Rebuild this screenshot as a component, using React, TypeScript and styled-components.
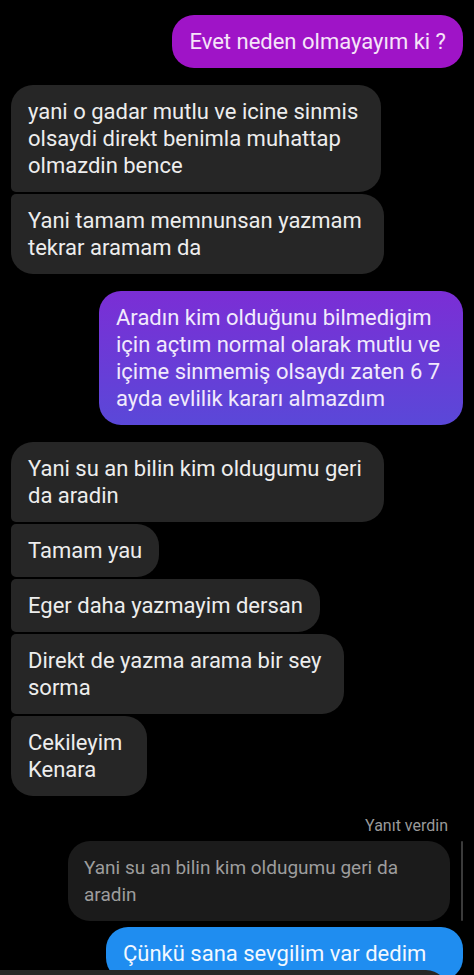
import React from "react";
import styled, { createGlobalStyle, css } from "styled-components";

const GlobalStyle = createGlobalStyle`
  html, body { margin: 0; padding: 0; background: #000; }
  body { font-family: Roboto, "Noto Sans", "Liberation Sans", sans-serif; }
  * { box-sizing: border-box; }
`;

const Screen = styled.div`
  position: relative;
  width: 474px;
  height: 975px;
  overflow: hidden;
  background: #000;
  display: flex;
  flex-direction: column;
  padding: 15px 11px 0 11px;
`;

type Pos = "single" | "first" | "middle" | "last";
type Tone = "gray" | "magenta" | "violet" | "blue";

const Group = styled.div<{ $top: number; $align: "start" | "end" }>`
  display: flex;
  flex-direction: column;
  align-items: ${(p) => (p.$align === "end" ? "flex-end" : "flex-start")};
  gap: 2px;
  margin-top: ${(p) => p.$top}px;
  flex-shrink: 0;
`;

const BIG = 22;
const SMALL = 5;

const toneStyles: Record<Tone, ReturnType<typeof css>> = {
  gray: css`
    background: #262626;
    color: #ededed;
  `,
  magenta: css`
    background: #9f14c7;
    color: #f6e4f9;
  `,
  violet: css`
    background: linear-gradient(180deg, #7b2ed5 0%, #5a48d8 100%);
    color: #f1eafc;
  `,
  blue: css`
    background: #1f8df0;
    color: #f2f8ff;
  `,
};

const Bubble = styled.div<{ $tone: Tone; $pos: Pos; $extra?: number; $width?: number }>`
  ${(p) => toneStyles[p.$tone]}
  font-family: Roboto, "Noto Sans", "Liberation Sans", sans-serif;
  font-size: 22px;
  line-height: 27px;
  padding: 13px ${(p) => 17 + (p.$extra ?? 0)}px 13px 17px;
  width: ${(p) => (p.$width ? `${p.$width}px` : "fit-content")};
  white-space: nowrap;
  flex-shrink: 0;
  border-radius: ${(p) => {
    const tl = p.$pos === "middle" || p.$pos === "last" ? SMALL : BIG;
    const bl = p.$pos === "first" || p.$pos === "middle" ? SMALL : BIG;
    return `${tl}px ${BIG}px ${BIG}px ${bl}px`;
  }};
`;

const ReplyLabel = styled.div`
  margin-top: 20px;
  padding-right: 15px;
  text-align: right;
  font-size: 16px;
  line-height: 20px;
  color: #9a9a9a;
  flex-shrink: 0;
`;

const ReplyRow = styled.div`
  margin-top: 5px;
  display: flex;
  justify-content: flex-end;
  align-items: stretch;
  gap: 11px;
  flex-shrink: 0;
`;

const QuoteBubble = styled.div`
  width: 382px;
  background: #1b1b1b;
  color: #9d9d9d;
  font-size: 19px;
  line-height: 27px;
  padding: 13px 16px;
  border-radius: 22px;
  white-space: nowrap;
`;

const QuoteBar = styled.div`
  width: 2px;
  border-radius: 1px;
  background: #3b3b3b;
`;

const Composer = styled.div`
  position: absolute;
  left: -30px;
  right: 26px;
  bottom: -40px;
  height: 45px;
  background: #262626;
  border-radius: 22px;
`;

const Lines: React.FC<{ lines: string[] }> = ({ lines }) => (
  <>
    {lines.map((l, i) => (
      <React.Fragment key={i}>
        {i > 0 && <br />}
        {l}
      </React.Fragment>
    ))}
  </>
);

export default function App() {
  return (
    <>
      <GlobalStyle />
      <Screen>
        <Group $top={0} $align="end">
          <Bubble $tone="magenta" $pos="single">
            Evet neden olmayayım ki ?
          </Bubble>
        </Group>

        <Group $top={17} $align="start">
          <Bubble $tone="gray" $pos="first" $extra={6}>
            <Lines
              lines={[
                "yani o gadar mutlu ve icine sinmis",
                "olsaydi direkt benimla muhattap",
                "olmazdin bence",
              ]}
            />
          </Bubble>
          <Bubble $tone="gray" $pos="last" $extra={5}>
            <Lines lines={["Yani tamam memnunsan yazmam", "tekrar aramam da"]} />
          </Bubble>
        </Group>

        <Group $top={17} $align="end">
          <Bubble $tone="violet" $pos="single" $width={364}>
            <Lines
              lines={[
                "Aradın kim olduğunu bilmedigim",
                "için açtım normal olarak mutlu ve",
                "içime sinmemiş olsaydı zaten 6 7",
                "ayda evlilik kararı almazdım",
              ]}
            />
          </Bubble>
        </Group>

        <Group $top={17} $align="start">
          <Bubble $tone="gray" $pos="first" $extra={5}>
            <Lines lines={["Yani su an bilin kim oldugumu geri", "da aradin"]} />
          </Bubble>
          <Bubble $tone="gray" $pos="middle">
            Tamam yau
          </Bubble>
          <Bubble $tone="gray" $pos="middle">
            Eger daha yazmayim dersan
          </Bubble>
          <Bubble $tone="gray" $pos="middle" $extra={6}>
            <Lines lines={["Direkt de yazma arama bir sey", "sorma"]} />
          </Bubble>
          <Bubble $tone="gray" $pos="last" $extra={8}>
            <Lines lines={["Cekileyim", "Kenara"]} />
          </Bubble>
        </Group>

        <ReplyLabel>Yanıt verdin</ReplyLabel>
        <ReplyRow>
          <QuoteBubble>
            <Lines lines={["Yani su an bilin kim oldugumu geri da", "aradin"]} />
          </QuoteBubble>
          <QuoteBar />
        </ReplyRow>

        <Group $top={6} $align="end">
          <Bubble $tone="blue" $pos="single" $width={357}>
            Çünkü sana sevgilim var dedim
          </Bubble>
        </Group>

        <Composer />
      </Screen>
    </>
  );
}
